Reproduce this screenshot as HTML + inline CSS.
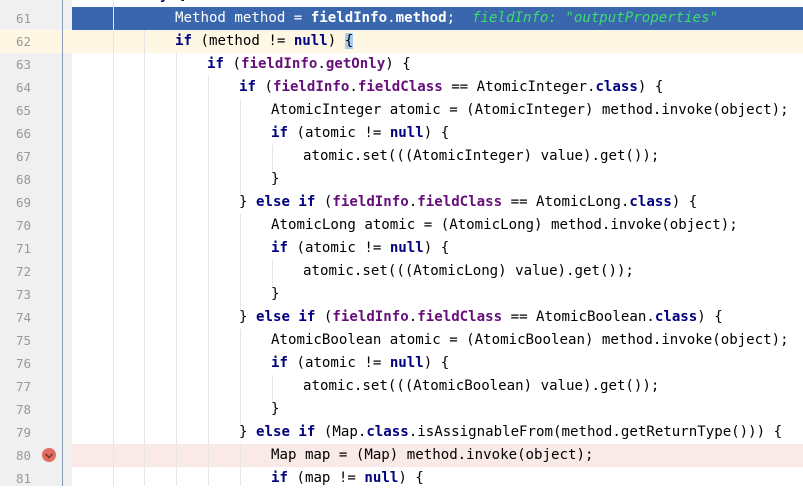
<!DOCTYPE html>
<html><head><meta charset="utf-8"><style>
body{margin:0;width:803px;height:486px;overflow:hidden;background:#fff;position:relative;font-family:"DejaVu Sans Mono","Liberation Mono",monospace;font-size:14.1px}
.g{position:absolute;left:0;top:0;width:72px;height:486px;background:#f0f0f0}
.gl{position:absolute;left:62px;top:0;width:1px;height:486px;background:#8a9bb5}
.row{position:absolute;left:0;width:803px;height:23px}
.n{position:absolute;left:0;width:31px;text-align:right;color:#999;line-height:23px;font-size:12.5px}
.t{position:absolute;line-height:23px;white-space:pre;color:#000}
.k{color:#000080;font-weight:bold}
.f{color:#660e7a;font-weight:bold}
.ig{position:absolute;width:1px;background:#e6e6e6}
</style></head><body>
<div class="g"></div>
<div style="position:absolute;left:0;top:30px;width:803px;height:23px;background:#fdf7e3"></div>
<div style="position:absolute;left:72px;top:7px;width:731px;height:23px;background:#3a66ad"></div>
<div style="position:absolute;left:72px;top:444px;width:731px;height:23px;background:#f9e9e7"></div>
<div class="gl"></div>
<div class="ig" style="left:113px;top:0;height:486px"></div>
<div class="ig" style="left:144px;top:30px;height:456px"></div>
<div class="ig" style="left:176px;top:53px;height:433px"></div>
<div class="ig" style="left:208px;top:76px;height:410px"></div>
<div class="ig" style="left:240px;top:99px;height:96px"></div>
<div class="ig" style="left:240px;top:214px;height:96px"></div>
<div class="ig" style="left:240px;top:329px;height:96px"></div>
<div class="ig" style="left:240px;top:444px;height:42px"></div>
<div class="ig" style="left:272px;top:145px;height:28px"></div>
<div class="ig" style="left:272px;top:260px;height:28px"></div>
<div class="ig" style="left:272px;top:375px;height:28px"></div>
<div style="position:absolute;left:42px;top:448px;width:14px;height:14px;border-radius:50%;background:#e06b5e"></div>
<svg style="position:absolute;left:42px;top:448px" width="14" height="14"><path d="M3.5 6 L7 9.5 L10.5 6" stroke="#7a3a35" stroke-width="1.6" fill="none"/></svg>
<div class="row" style="top:-16px"><span class="t" style="left:143px"><span class="k">try</span> {</span></div>
<div class="row" style="top:7px"><span class="n">61</span><span class="t" style="left:175px;color:#fff">Method method = <b>fieldInfo</b>.<b>method</b>;  <i style="color:#3ddc6e">fieldInfo: "outputProperties"</i></span></div>
<div class="row" style="top:30px"><span class="n">62</span><span class="t" style="left:175px"><span class="k">if</span> (method != <span class="k">null</span>) <span style="background:#a8cdf0">{</span></span></div>
<div class="row" style="top:53px"><span class="n">63</span><span class="t" style="left:207px"><span class="k">if</span> (<span class="f">fieldInfo</span>.<span class="f">getOnly</span>) {</span></div>
<div class="row" style="top:76px"><span class="n">64</span><span class="t" style="left:239px"><span class="k">if</span> (<span class="f">fieldInfo</span>.<span class="f">fieldClass</span> == AtomicInteger.<span class="k">class</span>) {</span></div>
<div class="row" style="top:99px"><span class="n">65</span><span class="t" style="left:271px">AtomicInteger atomic = (AtomicInteger) method.invoke(object);</span></div>
<div class="row" style="top:122px"><span class="n">66</span><span class="t" style="left:271px"><span class="k">if</span> (atomic != <span class="k">null</span>) {</span></div>
<div class="row" style="top:145px"><span class="n">67</span><span class="t" style="left:303px">atomic.set(((AtomicInteger) value).get());</span></div>
<div class="row" style="top:168px"><span class="n">68</span><span class="t" style="left:271px">}</span></div>
<div class="row" style="top:191px"><span class="n">69</span><span class="t" style="left:239px">} <span class="k">else if</span> (<span class="f">fieldInfo</span>.<span class="f">fieldClass</span> == AtomicLong.<span class="k">class</span>) {</span></div>
<div class="row" style="top:214px"><span class="n">70</span><span class="t" style="left:271px">AtomicLong atomic = (AtomicLong) method.invoke(object);</span></div>
<div class="row" style="top:237px"><span class="n">71</span><span class="t" style="left:271px"><span class="k">if</span> (atomic != <span class="k">null</span>) {</span></div>
<div class="row" style="top:260px"><span class="n">72</span><span class="t" style="left:303px">atomic.set(((AtomicLong) value).get());</span></div>
<div class="row" style="top:283px"><span class="n">73</span><span class="t" style="left:271px">}</span></div>
<div class="row" style="top:306px"><span class="n">74</span><span class="t" style="left:239px">} <span class="k">else if</span> (<span class="f">fieldInfo</span>.<span class="f">fieldClass</span> == AtomicBoolean.<span class="k">class</span>) {</span></div>
<div class="row" style="top:329px"><span class="n">75</span><span class="t" style="left:271px">AtomicBoolean atomic = (AtomicBoolean) method.invoke(object);</span></div>
<div class="row" style="top:352px"><span class="n">76</span><span class="t" style="left:271px"><span class="k">if</span> (atomic != <span class="k">null</span>) {</span></div>
<div class="row" style="top:375px"><span class="n">77</span><span class="t" style="left:303px">atomic.set(((AtomicBoolean) value).get());</span></div>
<div class="row" style="top:398px"><span class="n">78</span><span class="t" style="left:271px">}</span></div>
<div class="row" style="top:421px"><span class="n">79</span><span class="t" style="left:239px">} <span class="k">else if</span> (Map.<span class="k">class</span>.isAssignableFrom(method.getReturnType())) {</span></div>
<div class="row" style="top:444px"><span class="n">80</span><span class="t" style="left:271px">Map map = (Map) method.invoke(object);</span></div>
<div class="row" style="top:467px"><span class="n">81</span><span class="t" style="left:271px"><span class="k">if</span> (map != <span class="k">null</span>) {</span></div>
</body></html>
